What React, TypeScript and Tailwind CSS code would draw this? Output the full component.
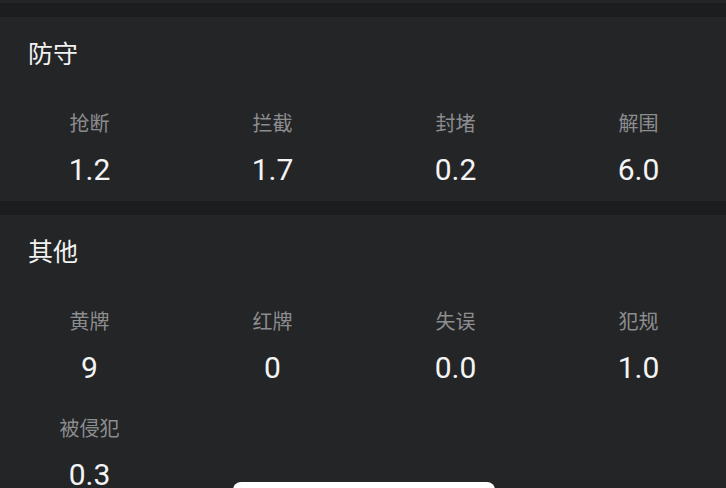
import React from "react";

type Stat = { label: string; value: string };

const sections: { title: string; stats: Stat[] }[] = [
  {
    title: "防守",
    stats: [
      { label: "抢断", value: "1.2" },
      { label: "拦截", value: "1.7" },
      { label: "封堵", value: "0.2" },
      { label: "解围", value: "6.0" },
    ],
  },
  {
    title: "其他",
    stats: [
      { label: "黄牌", value: "9" },
      { label: "红牌", value: "0" },
      { label: "失误", value: "0.0" },
      { label: "犯规", value: "1.0" },
      { label: "被侵犯", value: "0.3" },
    ],
  },
];

function Section({ title, stats }: { title: string; stats: Stat[] }) {
  return (
    <div className="bg-[#242527] pt-[18px] pb-[13px]">
      <div className="pl-[28px] text-[25px] leading-[34px] text-[#f2f2f2] [font-family:'Noto_Sans_CJK_SC',sans-serif]">
        {title}
      </div>
      <div className="mt-[40px] -ml-[2px] grid grid-cols-[repeat(4,183px)] gap-y-[28px]">
        {stats.map((s) => (
          <div key={s.label} className="flex flex-col items-center">
            <div className="text-[20px] leading-[28px] text-[#8c8d8f] [font-family:'Noto_Sans_CJK_SC',sans-serif]">
              {s.label}
            </div>
            <div className="mt-[15px] text-[30px] leading-[36px] text-[#f4f4f4] [font-family:Roboto,'Noto_Sans_CJK_SC',sans-serif]">
              {s.value}
            </div>
          </div>
        ))}
      </div>
    </div>
  );
}

export default function App() {
  return (
    <div className="relative h-[488px] w-[726px] overflow-hidden bg-[#1c1d1f]">
      <div className="h-[3px] bg-[#242527]" />
      <div className="mt-[14px] flex flex-col gap-[14px]">
        {sections.map((s) => (
          <Section key={s.title} title={s.title} stats={s.stats} />
        ))}
      </div>
      <div className="absolute left-[233px] top-[482px] h-[20px] w-[262px] rounded-t-[8px] bg-white" />
    </div>
  );
}
